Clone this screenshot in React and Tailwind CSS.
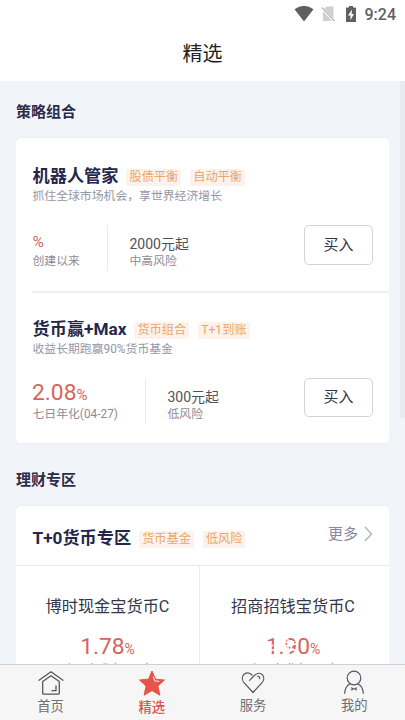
import React from "react";

const Tag = ({ children, className = "" }) => (
  <span className={"h-[17px] rounded-[2px] bg-[#fef3ec] px-[3px] text-[12.200px] leading-[17px] text-[#eba66a] " + className}>
    {children}
  </span>
);

const BuyButton = ({ className }) => (
  <button className={"w-[69px] shrink-0 rounded-[5px] border border-[#d3d4d8] text-[15px] text-[#34364a] " + className}>
    买入
  </button>
);

function Product({ name, tags, desc, rate, rateLabel, rateWidth, amount, risk, className, buttonClass }) {
  return (
    <section className={"pl-[16.500px] " + className}>
      <div className="flex h-[22px] items-center">
        <h3 className="text-[17.200px] font-bold leading-[22px] text-[#25274a]">{name}</h3>
        <Tag className="ml-[8px] mt-[3px]">{tags[0]}</Tag>
        <Tag className="ml-[9px] mt-[3px]">{tags[1]}</Tag>
      </div>
      <p className="h-[18px] text-[11.850px] leading-[18px] text-[#9596a4]">{desc}</p>
      <div className="mt-[20px] flex h-[46px]">
        <div className={"border-r border-[#e9eaf0] " + rateWidth}>
          <div className="flex h-[28px] items-baseline text-[#d5655d]">
            {rate ? (
              <>
                <span className="-ml-[0.5px] text-[22.800px] leading-[29px]">{rate}</span>
                <span className="text-[15px] leading-[28px]">%</span>
              </>
            ) : (
              <span className="pt-[3px] text-[15.500px] leading-[28px]">%</span>
            )}
          </div>
          <div className="whitespace-nowrap text-[11.850px] leading-[17px] text-[#8b8c93]">{rateLabel}</div>
        </div>
        <div className="ml-[22px] flex-1">
          <div className="mt-[9px] h-[19px] text-[14px] leading-[20px] text-[#515258]">{amount}</div>
          <div className="text-[11.850px] leading-[17px] text-[#8b8c93]">{risk}</div>
        </div>
        <BuyButton className={"mr-[16px] " + buttonClass} />
      </div>
    </section>
  );
}

function Fund({ name, children, className }) {
  return (
    <div className={"flex flex-col items-center pt-[29px] " + className}>
      <div className="h-[24px] text-[16.200px] leading-[24px] text-[#34364a]">{name}</div>
      <div className="mt-[13px] flex h-[28px] items-baseline leading-[30px] text-[#d5655d]">
        {children}
        <span className="text-[14px]">%</span>
      </div>
      <div className="text-[11.850px] leading-[18px] text-[#8b8c93]">七日年化(04-27)</div>
    </div>
  );
}

const navItems = [
  {
    label: "首页",
    icon: (
      <svg width="28" height="28" viewBox="0 0 28 28" fill="none" stroke="#55565c" strokeWidth="1.300" strokeLinejoin="round" strokeLinecap="round">
        <path d="M2 11.200 14 2.800l12 8.400" />
        <path d="M5.700 12.500v11.700q0 1 1 1h14.600q1 0 1-1V12.500L14 6.800z" />
        <path d="M19 17v4.700h-4" />
      </svg>
    ),
  },
  {
    label: "精选",
    active: true,
    icon: (
      <svg width="28" height="28" viewBox="0 0 28 28">
        <path d="m14 2 3.500 8.200 9 .8-6.600 6.100 2 9.100-7.900-4.600-7.900 4.600 2-9.100L1.500 11l9-.8z" fill="#e65349" stroke="#e65349" strokeLinejoin="round" />
        <path d="m15.300 8 1.500 3.900 4 .5" fill="none" stroke="#fbd5d2" strokeWidth="1.100" strokeLinecap="round" />
      </svg>
    ),
  },
  {
    label: "服务",
    raised: true,
    icon: (
      <svg width="28" height="28" viewBox="0 0 28 28" fill="none" stroke="#55565c" strokeWidth="1.200" strokeLinejoin="round" strokeLinecap="round">
        <path d="M10.500 11.300 14.800 7C18 3.500 21.700 3.700 23.300 5.600c2.200 2.500 1.700 6-.5 8.300L14 23.500l-8.800-9.600C3 11.600 2.700 8.100 4.700 5.600 6.800 3.100 10.600 3.200 13 6" />
        <path d="M18.700 7.200q2 .3 2.200 2.400" />
      </svg>
    ),
  },
  {
    label: "我的",
    raised: true,
    icon: (
      <svg width="28" height="28" viewBox="0 0 28 28" fill="none" stroke="#55565c" strokeWidth="1.200" strokeLinejoin="round" strokeLinecap="round">
        <circle cx="14" cy="9" r="6.800" />
        <path d="M10.300 14.800C7 16.300 5 19.500 4.700 24.300M17.700 14.800c3.300 1.500 5.300 4.700 5.600 9.500" />
        <path d="m11.600 18.500 2.400 1.300 2.400-1.300v2.800L14 20l-2.400 1.300z" fill="#55565c" strokeWidth=".4" />
      </svg>
    ),
  },
];

export default function App() {
  return (
    <div className="flex h-[720px] w-[405px] flex-col overflow-hidden bg-[#f1f5fa] font-['Roboto','Noto_Sans_CJK_SC',sans-serif]">
      <header className="h-[81px] shrink-0 bg-white">
        <div className="flex h-[27px] items-center justify-end pr-[9px]">
          <svg width="20" height="16" viewBox="0 0 20 16" fill="#5f6062">
            <path d="M.5 3.300Q10-3.500 19.500 3.300L10 15.500z" />
          </svg>
          <svg className="ml-[7px]" width="15" height="18" viewBox="0 0 15 18">
            <path d="M5.500 1.500h7V16H2V5z" fill="#cfcfcf" />
            <path d="m.5 2.500 13 14" stroke="#fff" strokeWidth="2.800" />
            <path d="m1 2.500 12.500 13.500" stroke="#b5b5b5" strokeWidth="1.200" />
          </svg>
          <svg className="ml-[9px]" width="12" height="18" viewBox="0 0 12 18">
            <path d="M1.500 2.500H4V1h4v1.500h2.500q.5 0 .5.500v13.500q0 .5-.5.500h-9q-.5 0-.5-.5V3q0-.5.5-.5z" fill="#5f6062" />
            <path d="M7 4.500 3 10.500h2.500V15L9 9H6.600z" fill="#fff" />
          </svg>
          <span className="ml-[8px] mt-[2px] text-[16px] font-medium leading-[20px] text-[#5f6062]">9:24</span>
        </div>
        <h1 className="mt-[12px] text-center text-[20px] leading-[30px] text-[#222]">精选</h1>
      </header>

      <div className="flex min-h-0 flex-1">
        <main className="ml-[16px] w-[373px] overflow-hidden">
          <h2 className="mt-[19px] h-[24px] text-[15px] font-bold leading-[24px] text-[#2b2d4c]">策略组合</h2>
          <div className="mt-[14px] h-[305px] rounded-[5px] bg-white shadow-[0_0_5px_rgba(60,80,120,0.05)]">
            <Product
              name="机器人管家" tags={["股债平衡", "自动平衡"]} desc="抓住全球市场机会，享世界经济增长"
              rateLabel="创建以来" rateWidth="w-[75px]" amount="2000元起" risk="中高风险"
              className="h-[153px] pt-[27px]" buttonClass="h-[40px]"
            />
            <div className="ml-[16px] h-[2px] bg-[#eff0f3]" />
            <Product
              name="货币赢+Max" tags={["货币组合", "T+1到账"]} desc="收益长期跑赢90%货币基金"
              rate="2.08" rateLabel="七日年化(04-27)" rateWidth="w-[113px]" amount="300元起" risk="低风险"
              className="pt-[25px]" buttonClass="h-[39px]"
            />
          </div>

          <h2 className="mt-[25px] h-[24px] text-[15px] font-bold leading-[24px] text-[#2b2d4c]">理财专区</h2>
          <div className="mt-[14px] h-[220px] rounded-t-[5px] bg-white shadow-[0_0_5px_rgba(60,80,120,0.05)]">
            <div className="flex h-[60px] items-center border-b border-[#e8e9ec] pl-[16.500px] pr-[16px]">
              <h3 className="mt-[6px] text-[17.200px] font-bold text-[#25274a]">T+0货币专区</h3>
              <Tag className="ml-[8px] mt-[8px]">货币基金</Tag>
              <Tag className="ml-[9px] mt-[8px]">低风险</Tag>
              <span className="mb-[2px] ml-auto text-[15px] text-[#8788a0]">更多</span>
              <svg className="mb-[4px] ml-[6px]" width="9" height="16" viewBox="0 0 9 16" fill="none" stroke="#b5b6bf" strokeWidth="1.500">
                <path d="m1 1 6.500 7L1 15" />
              </svg>
            </div>
            <div className="flex h-[160px]">
              <Fund name="博时现金宝货币C" className="w-[183px]">
                <span className="text-[22.800px]">1.78</span>
              </Fund>
              <div className="w-px bg-[#ebecf0]" />
              <Fund name="招商招钱宝货币C" className="w-[186px]">
                <span className="relative text-[22.800px]">
                  1.90
                  <svg className="absolute left-0 top-[4px]" width="44" height="22" viewBox="0 0 44 22" fill="none" stroke="#fff" strokeWidth="1.500">
                    <path d="M0 6h6M7 9l-4 3M5 14h7M17 6l11 1M18 10l12-2M16 14h14M22 3v16M28 5l-6 14" />
                  </svg>
                </span>
              </Fund>
            </div>
          </div>
        </main>
        <div className="ml-auto h-[337px] w-[5px] bg-[#e8ecf0]" />
      </div>

      <nav className="flex h-[56px] shrink-0 border-t border-[#cfd0d3] bg-[#f6f6f6]">
        {navItems.map((item) => (
          <div key={item.label} className="flex flex-1 flex-col items-center pt-[4px]">
            {item.icon}
            <span
              className={
                "text-[13.300px] leading-[19px] " +
                (item.active ? "mt-px font-medium text-[#d9564d]" : item.raised ? "-mt-px text-[#6f7074]" : "text-[#6f7074]")
              }
            >
              {item.label}
            </span>
          </div>
        ))}
      </nav>
    </div>
  );
}
